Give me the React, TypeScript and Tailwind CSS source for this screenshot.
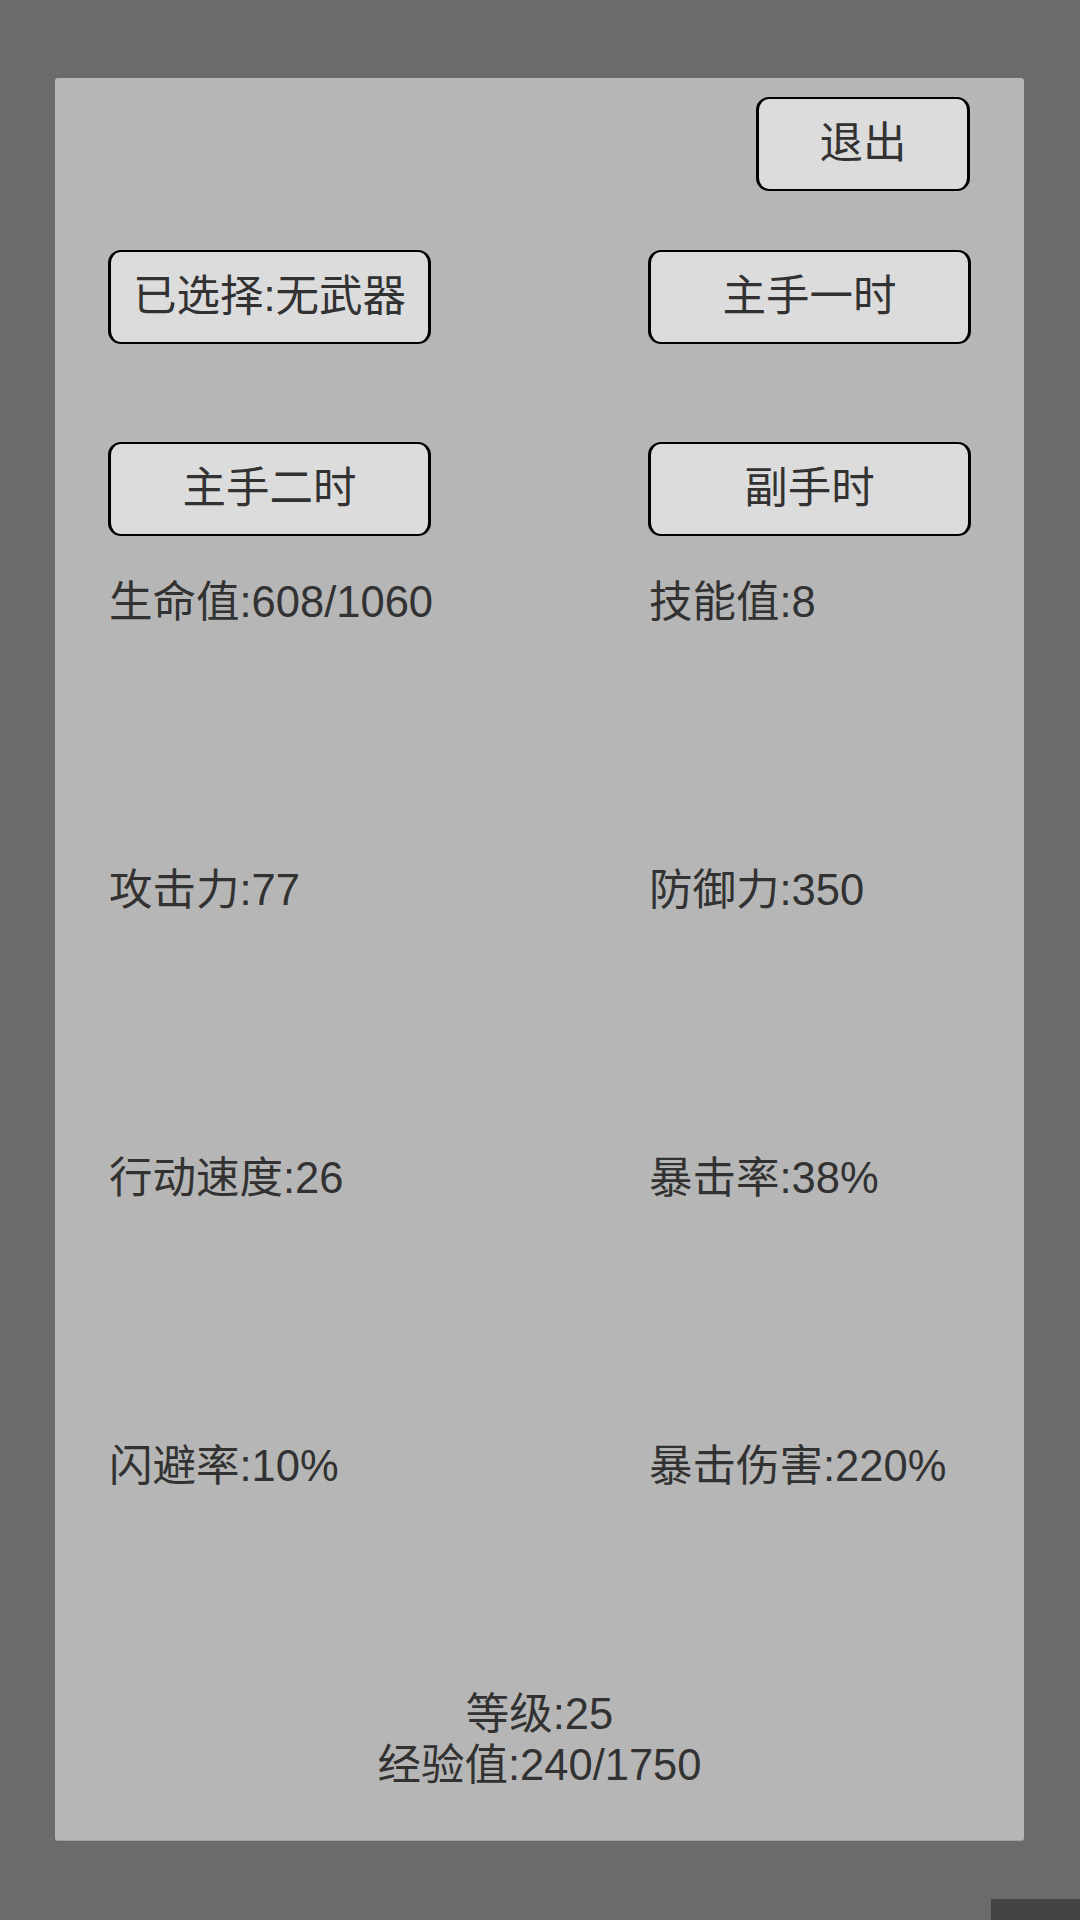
import React from "react";

const font = { fontFamily: '"Liberation Sans", "Noto Sans CJK SC", sans-serif' };

function Btn({ label, className = "" }: { label: string; className?: string }) {
  return (
    <div
      className={
        "flex items-center justify-center h-[94px] bg-[#dcdcdc] border-x-[3px] border-y-2 border-black rounded-[13px] text-[43.5px] leading-none text-[#323232] " +
        className
      }
    >
      {label}
    </div>
  );
}

const stats: [string, string][] = [
  ["生命值:608/1060", "技能值:8"],
  ["攻击力:77", "防御力:350"],
  ["行动速度:26", "暴击率:38%"],
  ["闪避率:10%", "暴击伤害:220%"],
];

export default function App() {
  return (
    <div className="relative w-[1080px] h-[1920px] bg-[#6b6b6b] pt-[78px] pl-[55px] overflow-hidden" style={font}>
      <div className="w-[969px] h-[1763px] bg-[#b6b6b6] rounded-[3px] border-b border-[#a0a0a0] flex flex-col">
        <div className="flex justify-end pr-[54px] pt-[19px]">
          <Btn label="退出" className="w-[214px]" />
        </div>
        <div className="grid grid-cols-[323px_323px] gap-x-[217px] gap-y-[98px] pl-[53px] mt-[59px]">
          <Btn label="已选择:无武器" />
          <Btn label="主手一时" />
          <Btn label="主手二时" />
          <Btn label="副手时" />
        </div>
        <div className="grid grid-cols-[540px_1fr] gap-y-[238px] pl-[54px] mt-[41px] text-[43.5px] leading-[50px] text-[#323232]">
          {stats.map(([a, b]) => (
            <React.Fragment key={a}>
              <div>{a}</div>
              <div>{b}</div>
            </React.Fragment>
          ))}
        </div>
        <div className="flex flex-col items-center mt-[198px] text-[43.5px] leading-[51px] text-[#323232]">
          <div>等级:25</div>
          <div>经验值:240/1750</div>
        </div>
      </div>
      <div className="absolute right-0 bottom-0 w-[89px] h-[21px] bg-[#444444]" />
    </div>
  );
}
